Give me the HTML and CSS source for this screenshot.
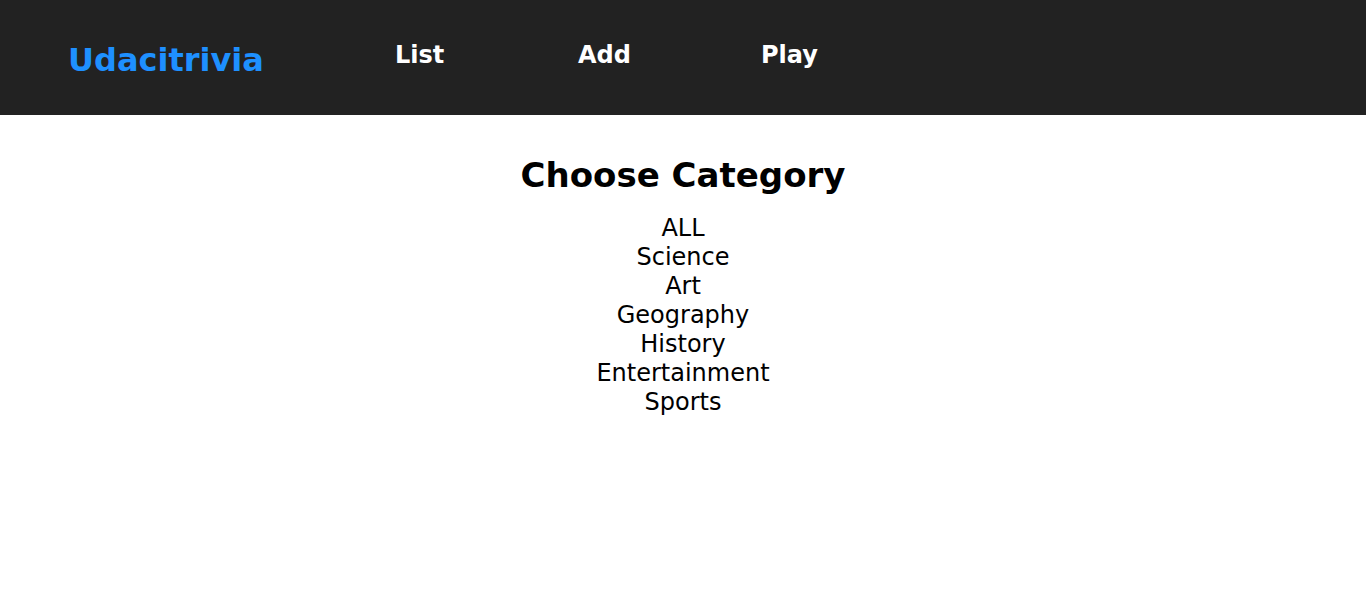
FILE: index.html
```
<!DOCTYPE html>
<html lang="en">
<head>
<meta charset="utf-8">
<title>Udacitrivia</title>
<link rel="stylesheet" href="styles.css">
</head>
<body>
<header class="app-header">
  <h1 class="brand">Udacitrivia</h1>
  <nav class="nav">
    <h2 class="nav-item">List</h2>
    <h2 class="nav-item">Add</h2>
    <h2 class="nav-item">Play</h2>
  </nav>
</header>
<main class="quiz-play-holder">
  <h2 class="choose-header">Choose Category</h2>
  <div class="category-list">
    <div class="play-category">ALL</div>
    <div class="play-category">Science</div>
    <div class="play-category">Art</div>
    <div class="play-category">Geography</div>
    <div class="play-category">History</div>
    <div class="play-category">Entertainment</div>
    <div class="play-category">Sports</div>
  </div>
</main>
</body>
</html>
```
FILE: styles.css
```
html, body {
  margin: 0;
  padding: 0;
  background: #fff;
  font-family: "DejaVu Sans", sans-serif;
  color: #000;
}

.app-header {
  display: flex;
  flex-direction: row;
  align-items: flex-start;
  height: 115px;
  box-sizing: border-box;
  padding-left: 68px;
  background-color: #222;
  color: #fff;
}

.brand {
  margin: 0;
  margin-top: 42px;
  width: 327px;
  font-size: 32px;
  font-weight: bold;
  line-height: 37px;
  color: #1e90ff;
}

.nav {
  display: flex;
  flex-direction: row;
}

.nav-item {
  margin: 0;
  margin-top: 41px;
  width: 183px;
  font-size: 24px;
  font-weight: bold;
  line-height: 28px;
  color: #fff;
  cursor: pointer;
}

.quiz-play-holder {
  display: flex;
  flex-direction: column;
  align-items: center;
  padding-top: 40px;
}

.choose-header {
  margin: 0;
  font-size: 34px;
  font-weight: bold;
  line-height: 40px;
}

.category-list {
  margin-top: 19px;
  display: flex;
  flex-direction: column;
  align-items: center;
}

.play-category {
  font-size: 24px;
  line-height: 29px;
  cursor: pointer;
}
```
